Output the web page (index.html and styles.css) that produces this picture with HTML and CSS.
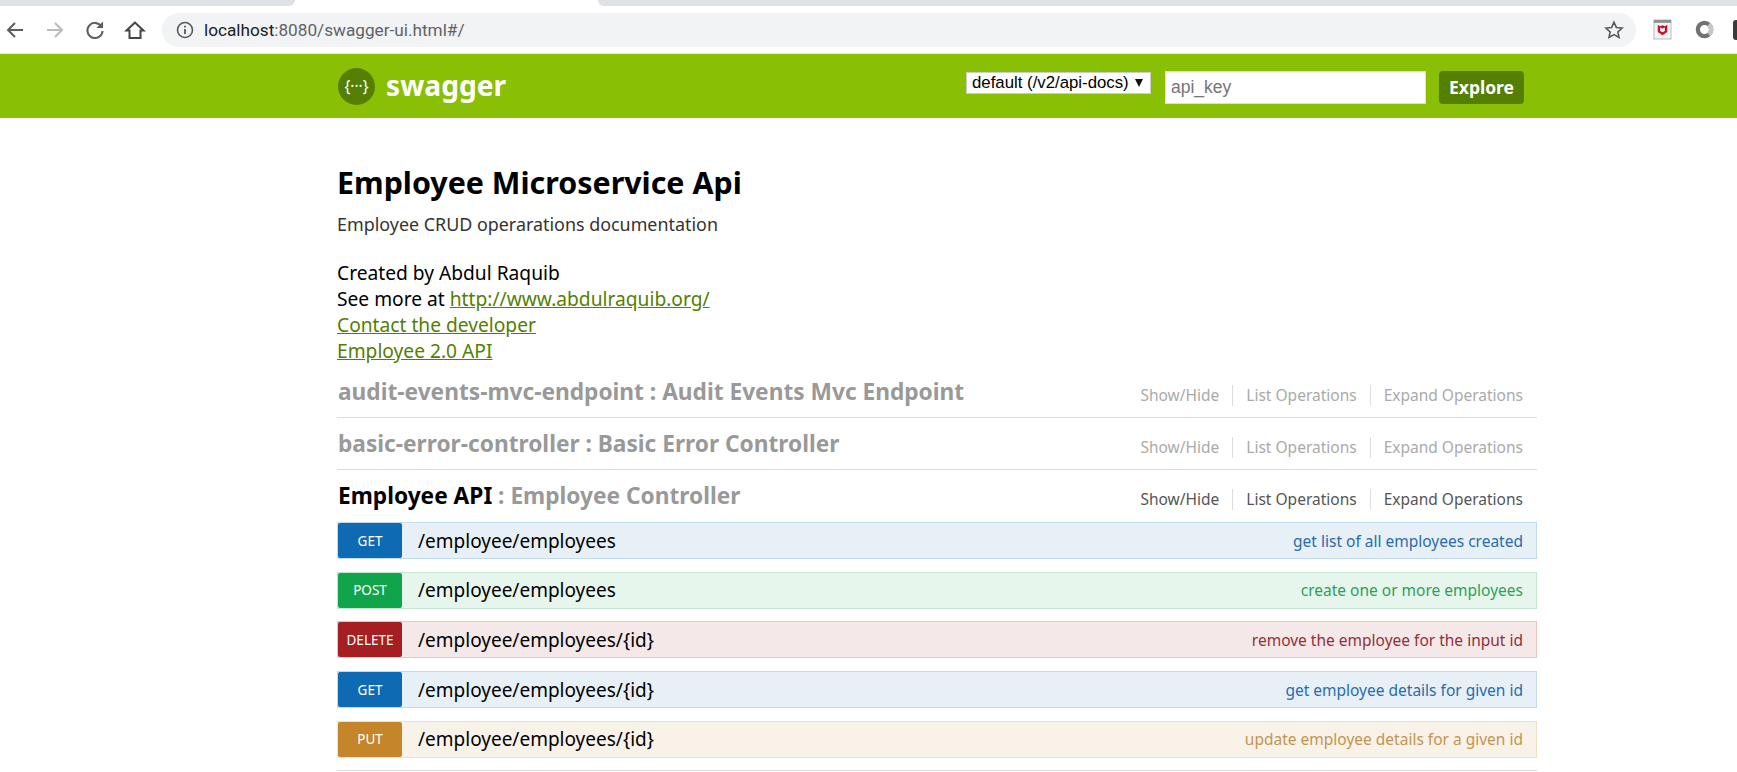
FILE: index.html
```html
<!DOCTYPE html>
<html>
<head>
<meta charset="utf-8"/>
<title>Swagger UI</title>
<link rel="stylesheet" href="styles.css">
</head>
<body>

<div class="tabstrip">
  <div class="tab-grey tab-left"></div>
  <div class="tab-white"></div>
  <div class="tab-grey tab-right"></div>
</div>

<div class="toolbar">
  <svg class="nav-icon" viewBox="0 0 24 24"><path d="M20 12H5M12 5l-7 7 7 7" fill="none" stroke="#5a5d61" stroke-width="2"/></svg>
  <svg class="nav-icon" viewBox="0 0 24 24"><path d="M4 12h15M12 5l7 7-7 7" fill="none" stroke="#b9bbbe" stroke-width="2"/></svg>
  <svg class="nav-icon" viewBox="0 0 24 24"><path d="M18.500 8.500A7.600 7.600 0 1 0 19.600 13" fill="none" stroke="#5a5d61" stroke-width="2"/><path d="M20 3.500V10h-6.500z" fill="#5a5d61"/></svg>
  <svg class="nav-icon" viewBox="0 0 24 24"><path d="M12 4.500 3.500 12.500H6.500V20h11v-7.500h3z" fill="none" stroke="#44474a" stroke-width="2"/></svg>
  <div class="omnibox">
    <svg class="info-icon" viewBox="0 0 20 20"><circle cx="10" cy="10" r="7.500" fill="none" stroke="#55585c" stroke-width="1.600"/><path d="M10 9v5M10 5.800v1.600" stroke="#55585c" stroke-width="1.800"/></svg>
    <span class="url">localhost<span class="url-rest">:8080/swagger-ui.html#/</span></span>
    <svg class="star-icon" viewBox="0 0 24 24"><path d="M12 3.500l2.600 5.700 6.200.7-4.600 4.200 1.300 6.100-5.500-3.100-5.500 3.100 1.300-6.100-4.600-4.200 6.200-.7z" fill="none" stroke="#55585c" stroke-width="1.700"/></svg>
  </div>
  <svg class="ext-icon" viewBox="0 0 20 22"><rect x="1" y="1" width="18" height="20" fill="#f3f3f3" stroke="#b5b8ba"/><rect x="1" y="1" width="18" height="3" fill="#8e9193"/><path d="M5 6l2.500 1.500L10 6.500l2.500 1L15 6v7.500L10 17l-5-3.500z" fill="#c8102e"/><path d="M7.500 9v3.500l2.500 1.500 2.500-1.500V9l-2.500 1z" fill="#f3f3f3"/></svg>
  <svg class="ext-icon ext-round" viewBox="0 0 20 20"><circle cx="10" cy="10" r="7" fill="none" stroke="#6f7173" stroke-width="4.500"/><path d="M14.500 4.600a7 7 0 0 1 0 10.800" fill="none" stroke="#c4c6c8" stroke-width="4.500"/></svg>
  <div class="ext-clip"></div>
</div>

<header class="swagger-bar">
  <div class="wrap bar-inner">
    <a class="logo">
      <svg class="logo-mark" viewBox="0 0 36 36"><circle cx="18" cy="18" r="18" fill="#547f00"/><text x="18" y="23" class="logo-glyph" text-anchor="middle">{···}</text></svg>
      <span class="logo-text">swagger</span>
    </a>
    <form class="api-form">
      <span class="select-box">
        <select class="spec-select"><option>default (/v2/api-docs)</option></select>
      </span>
      <input class="api-key" type="text" placeholder="api_key">
      <button class="explore" type="button">Explore</button>
    </form>
  </div>
</header>

<div class="wrap content">
  <h1 class="title">Employee Microservice Api</h1>
  <p class="description">Employee CRUD operarations documentation</p>
  <div class="contact">
    <div>Created by Abdul Raquib</div>
    <div>See more at <a href="#">http://www.abdulraquib.org/</a></div>
    <div><a href="#">Contact the developer</a></div>
    <div><a href="#">Employee 2.0 API</a></div>
  </div>

  <div class="resource muted">
    <h2 class="res-title">audit-events-mvc-endpoint : Audit Events Mvc Endpoint</h2>
    <ul class="res-links"><li>Show/Hide</li><li>List Operations</li><li>Expand Operations</li></ul>
  </div>
  <div class="resource muted">
    <h2 class="res-title">basic-error-controller : Basic Error Controller</h2>
    <ul class="res-links"><li>Show/Hide</li><li>List Operations</li><li>Expand Operations</li></ul>
  </div>
  <div class="resource open">
    <h2 class="res-title"><span class="res-name">Employee API</span> : Employee Controller</h2>
    <ul class="res-links"><li>Show/Hide</li><li>List Operations</li><li>Expand Operations</li></ul>
  </div>

  <div class="op op-get">
    <span class="method">GET</span><span class="path">/employee/employees</span><span class="summary">get list of all employees created</span>
  </div>
  <div class="op op-post">
    <span class="method">POST</span><span class="path">/employee/employees</span><span class="summary">create one or more employees</span>
  </div>
  <div class="op op-delete">
    <span class="method">DELETE</span><span class="path">/employee/employees/{id}</span><span class="summary">remove the employee for the input id</span>
  </div>
  <div class="op op-get">
    <span class="method">GET</span><span class="path">/employee/employees/{id}</span><span class="summary">get employee details for given id</span>
  </div>
  <div class="op op-put">
    <span class="method">PUT</span><span class="path">/employee/employees/{id}</span><span class="summary">update employee details for a given id</span>
  </div>
  <div class="end-line"></div>
</div>

</body>
</html>
```

FILE: styles.css
```css
html, body {
   margin: 0;
   height: 772px;
   overflow: hidden;
   background-color: white;
   font-family: "Noto Sans", "Open Sans", sans-serif;
   color: #000;
}

/* browser chrome */
.tabstrip {
   display: flex;
   height: 6px;
   background-color: white;
}

.tab-grey {
   background-color: #dee1e6;
}

.tab-left {
   width: 295px;
   border-bottom-right-radius: 6px;
}

.tab-white {
   width: 303px;
}

.tab-right {
   flex: 1;
   border-bottom-left-radius: 6px;
}

.toolbar {
   display: flex;
   align-items: center;
   height: 47px;
   box-sizing: border-box;
   padding-left: 3px;
   background-color: white;
}

.nav-icon {
   width: 24px;
   height: 24px;
   margin-right: 16px;
   flex: none;
}

.omnibox {
   display: flex;
   align-items: center;
   width: 1474px;
   height: 34px;
   margin-left: -1px;
   box-sizing: border-box;
   padding: 0 11px 0 13px;
   border-radius: 17px;
   background-color: #f1f3f4;
   flex: none;
}

.info-icon {
   width: 20px;
   height: 20px;
   margin-right: 9px;
}

.url {
   flex: 1;
   font-family: "Roboto", sans-serif;
   font-size: 17.200px;
   color: #202124;
}

.url-rest {
   color: #5f6368;
}

.star-icon {
   width: 22px;
   height: 22px;
}

.ext-icon {
   width: 19px;
   height: 21px;
   margin-left: 17px;
   flex: none;
}

.ext-round {
   margin-left: 23px;
}

.ext-clip {
   width: 9px;
   height: 20px;
   margin-left: 19px;
   border-radius: 3px 0 0 3px;
   background-color: #3a3a3c;
   flex: none;
}

/* swagger header */
.swagger-bar {
   height: 65px;
   border-top: 1px solid #e4e6e2;
   box-sizing: border-box;
   background-color: #89bf04;
}

.wrap {
   width: 1200px;
   margin-left: 337px;
}

.bar-inner {
   display: flex;
   align-items: center;
   justify-content: space-between;
   height: 100%;
}

.logo {
   display: flex;
   align-items: center;
   margin-left: 1px;
}

.logo-mark {
   width: 37px;
   height: 37px;
}

.logo-glyph {
   font-family: "Noto Sans", sans-serif;
   font-size: 15px;
   fill: white;
}

.logo-text {
   margin-left: 11px;
   font-size: 28.200px;
   font-weight: bold;
   color: white;
   position: relative;
   top: -1px;
}

.api-form {
   display: flex;
   align-items: flex-start;
   margin: 2px 13px 0 0;
}

.select-box {
   position: relative;
   width: 185px;
   height: 22px;
   margin: 1px 14px 0 0;
}

.select-box::after {
   content: "";
   position: absolute;
   top: 7px;
   right: 8px;
   border-left: 4px solid transparent;
   border-right: 4px solid transparent;
   border-top: 8px solid #111;
}

.spec-select {
   display: block;
   width: 100%;
   height: 22px;
   padding: 0 0 0 5px;
   border: 1px solid #ccc;
   border-radius: 0;
   background-color: white;
   appearance: none;
   font-family: "Liberation Sans", sans-serif;
   font-size: 16.800px;
}

.api-key {
   width: 261px;
   height: 33px;
   margin: 0 13px 0 0;
   box-sizing: border-box;
   padding: 3px 5px;
   border: 1px solid #ddd;
   font-family: "Liberation Sans", sans-serif;
   font-size: 17.500px;
}

.explore {
   width: 85px;
   height: 33px;
   padding: 0;
   border: none;
   border-radius: 4px;
   background-color: #547f00;
   color: white;
   font-family: "Noto Sans", sans-serif;
   font-size: 17.500px;
   font-weight: bold;
}

/* page content */
.title {
   margin: 0;
   padding-top: 45px;
   font-size: 30.400px;
   line-height: 40px;
   font-weight: bold;
}

.description {
   margin: 2px 0 0;
   font-size: 17.900px;
   line-height: 38px;
   color: #333;
}

.contact {
   margin: 17px 0 2px;
   font-size: 19.200px;
   line-height: 26px;
}

.contact a {
   color: #547f00;
}

.resource {
   display: flex;
   align-items: center;
   justify-content: space-between;
   height: 52px;
   box-sizing: border-box;
   padding-left: 1px;
   border-bottom: 1px solid #ddd;
}

.resource.open {
   padding-bottom: 2px;
   border-bottom: none;
}

.muted .res-links li {
   color: #aaa;
}

.res-title {
   margin: 0;
   font-size: 22.700px;
   font-weight: bold;
   color: #999;
}

.res-name {
   color: #000;
}

.res-links {
   display: flex;
   margin: 8px 0 0;
   padding: 0 14px 0 0;
   list-style: none;
   font-size: 15.500px;
   color: #555;
}

.res-links li {
   padding: 0 13px;
   line-height: 21px;
   border-right: 1px solid #ddd;
}

.res-links li:last-child {
   padding-right: 0;
   border-right: none;
}

/* operations */
.op {
   display: flex;
   align-items: center;
   height: 37px;
   box-sizing: border-box;
   margin-bottom: 12.700px;
   padding-right: 13px;
   border: 1px solid;
   font-size: 19px;
}

.method {
   display: flex;
   align-items: center;
   justify-content: center;
   width: 64px;
   height: 100%;
   border-radius: 2px;
   color: white;
   font-size: 13.500px;
}

.path {
   flex: 1;
   margin-left: 16px;
}

.summary {
   font-size: 15.500px;
}

.op-get {
   background-color: #e7f0f7;
   border-color: #c3d9ec;
}

.op-get .method {
   background-color: #0f6ab4;
}

.op-get .summary {
   color: #2a6cab;
}

.op-post {
   background-color: #e7f6ec;
   border-color: #c3e8d1;
}

.op-post .method {
   background-color: #10a54a;
}

.op-post .summary {
   color: #2f9e5c;
}

.op-delete {
   background-color: #f5e8e8;
   border-color: #e8c6c7;
}

.op-delete .method {
   background-color: #a41e22;
}

.op-delete .summary {
   color: #913238;
}

.op-put {
   background-color: #f9f2e9;
   border-color: #f0e0ca;
}

.op-put .method {
   background-color: #c5862b;
}

.op-put .summary {
   color: #c39550;
}

.end-line {
   border-top: 1px solid #ddd;
}
```
